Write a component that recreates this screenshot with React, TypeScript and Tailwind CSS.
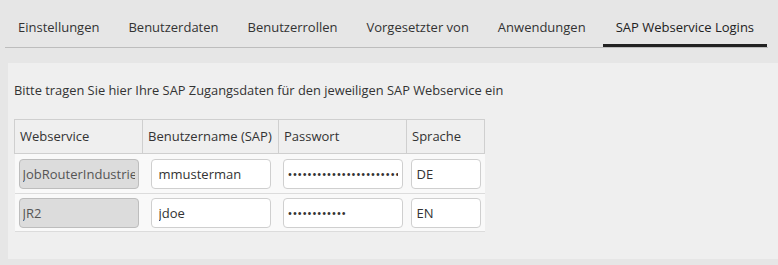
import React from "react";

const tabs = [
  "Einstellungen",
  "Benutzerdaten",
  "Benutzerrollen",
  "Vorgesetzter von",
  "Anwendungen",
  "SAP Webservice Logins",
];

const rows = [
  { ws: "JobRouterIndustries", user: "mmusterman", pw: "••••••••••••••••••••••••", lang: "DE" },
  { ws: "JR2", user: "jdoe", pw: "••••••••••••", lang: "EN" },
];

export default function App() {
  return (
    <div className="w-[778px] h-[265px] bg-[#e6e6e6] font-['Open_Sans',sans-serif] text-[13px] text-[#333] overflow-hidden">
      <div className="ml-[5px] w-[763px] flex gap-[3px] border-b border-[#bdbdbd]">
        {tabs.map((t, i) => {
          const active = i === tabs.length - 1;
          return (
            <div
              key={t}
              className={
                active
                  ? "ml-[1px] px-[13px] pt-[18px] pb-[8px] leading-[18px] border-b-[3px] border-[#222] text-[#222] whitespace-nowrap"
                  : "px-[13px] pt-[18px] pb-[8px] leading-[18px] border-b-[3px] border-transparent text-[#333] whitespace-nowrap"
              }
            >
              {t}
            </div>
          );
        })}
      </div>
      <div className="ml-[8px] mt-[15px] h-[196px] bg-[#efefef] pl-[6px] pt-[18px]">
        <p className="leading-[18px] text-[12.85px] text-[#333]">
          Bitte tragen Sie hier Ihre SAP Zugangsdaten für den jeweiligen SAP Webservice ein
        </p>
        <table className="mt-[20px] border-collapse w-[470px] table-fixed">
          <colgroup>
            <col className="w-[128px]" />
            <col className="w-[136px]" />
            <col className="w-[128px]" />
            <col className="w-[78px]" />
          </colgroup>
          <thead>
            <tr className="h-[34px]">
              {["Webservice", "Benutzername (SAP)", "Passwort", "Sprache"].map((h) => (
                <th
                  key={h}
                  className="border border-[#cfcfcf] px-[5px] text-left font-normal text-[#333] whitespace-nowrap"
                >
                  {h}
                </th>
              ))}
            </tr>
          </thead>
          <tbody>
            {rows.map((r, i) => (
              <tr key={i} className={i === 0 ? "h-[40px] bg-[#f9f9f9] border-b border-[#dcdcdc]" : "h-[38px] bg-[#f9f9f9] border-b border-[#dcdcdc]"}>
                <td className="px-[4px]">
                  <input
                    readOnly
                    value={r.ws}
                    className="w-[120px] h-[30px] rounded-[4px] border border-[#bdbdbd] bg-[#dcdcdc] px-[3px] text-[#555] text-[13px] outline-none"
                  />
                </td>
                <td className="pl-[8px]">
                  <input
                    readOnly
                    value={r.user}
                    className="w-[120px] h-[30px] rounded-[4px] border border-[#cfcfcf] bg-white px-[7px] text-[#333] text-[13px] outline-none"
                  />
                </td>
                <td className="pl-[4px]">
                  <input
                    readOnly
                    value={r.pw}
                    className="w-[120px] h-[30px] rounded-[4px] border border-[#cfcfcf] bg-white px-[4px] text-[#333] text-[13px] outline-none"
                  />
                </td>
                <td className="pl-[4px]">
                  <input
                    readOnly
                    value={r.lang}
                    className="w-[70px] h-[30px] rounded-[4px] border border-[#cfcfcf] bg-white px-[5px] text-[#333] text-[13px] outline-none"
                  />
                </td>
              </tr>
            ))}
          </tbody>
        </table>
      </div>
    </div>
  );
}
